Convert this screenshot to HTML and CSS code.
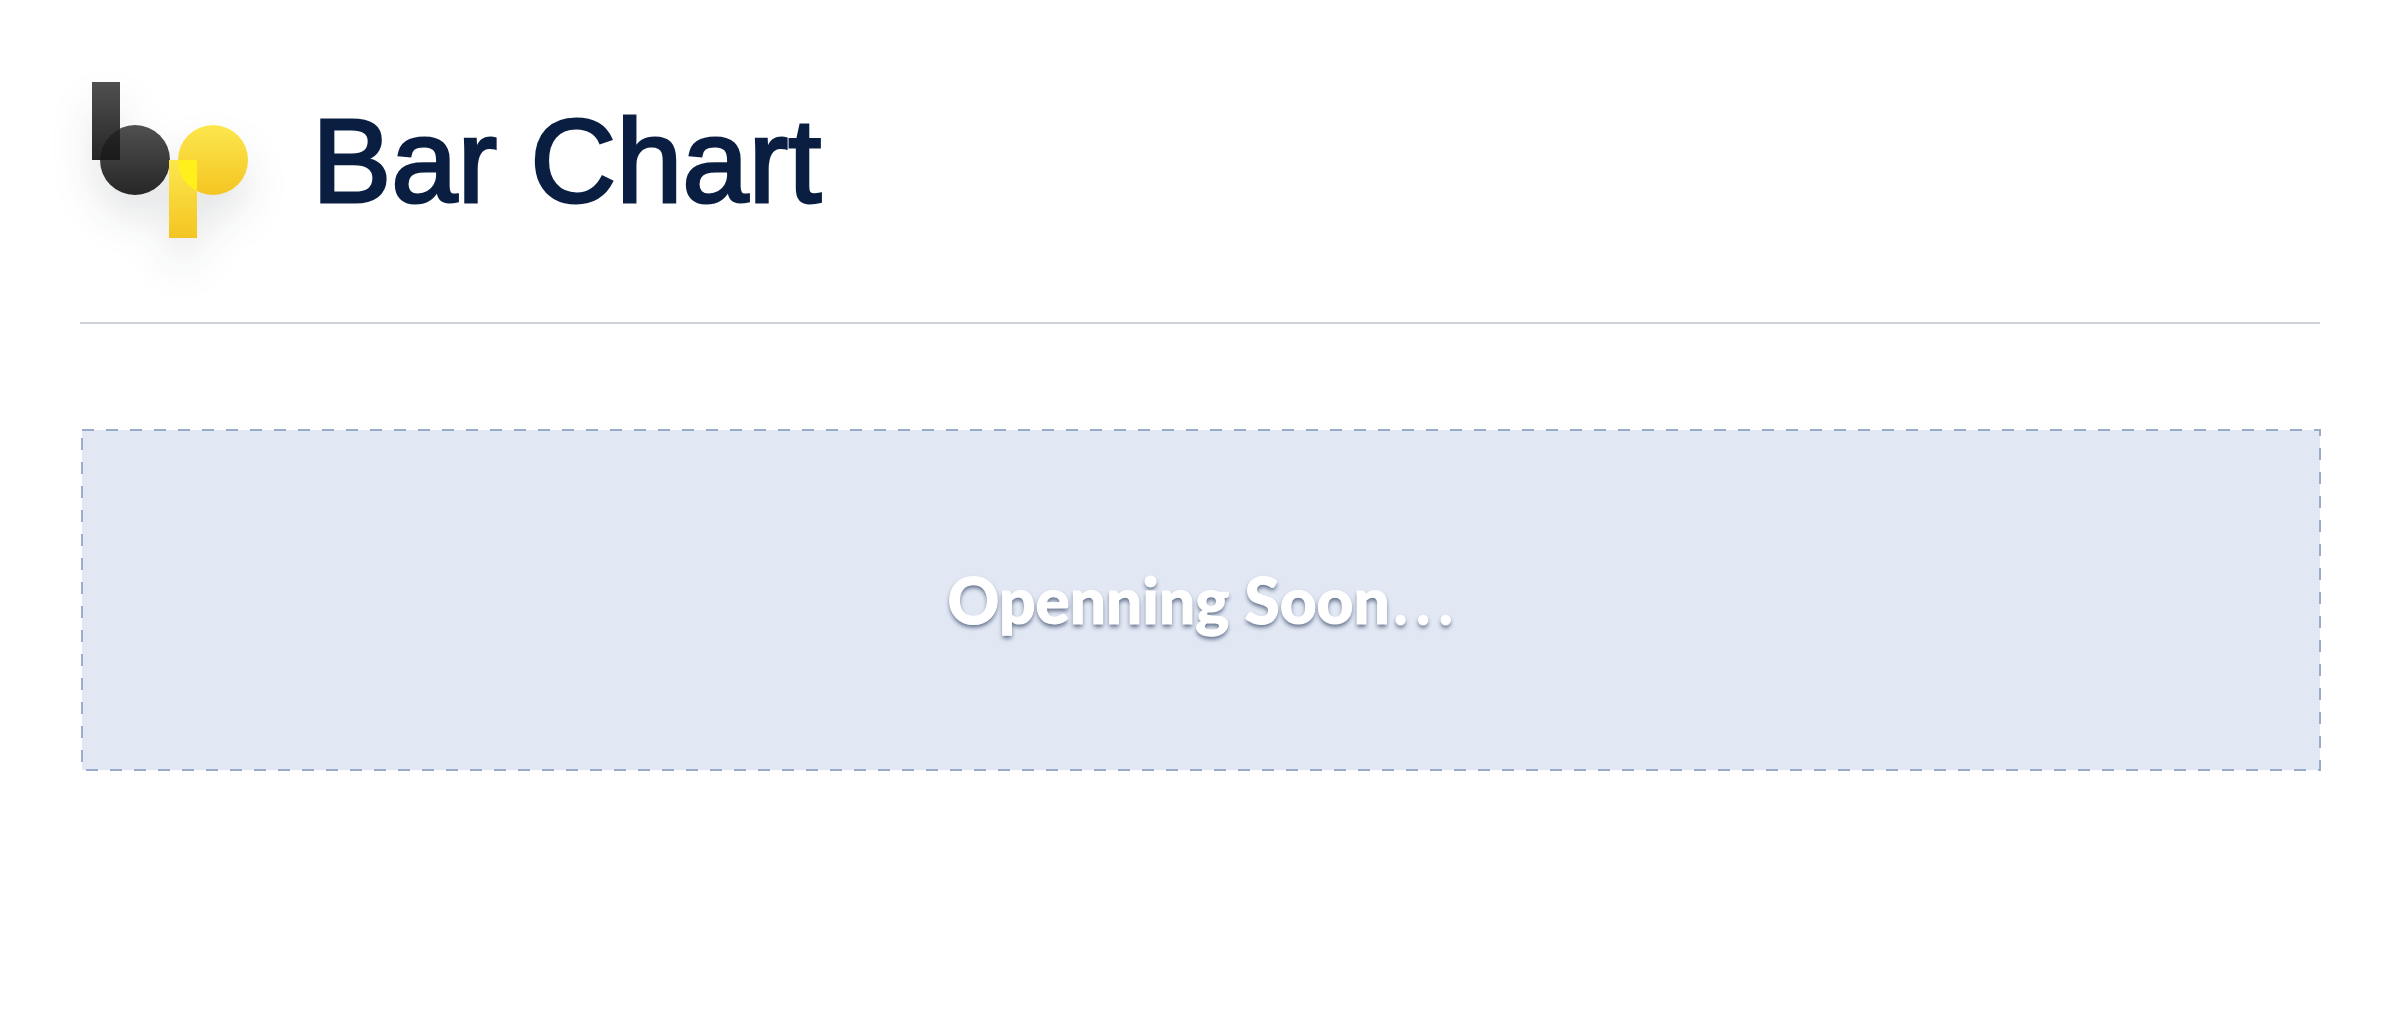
FILE: index.html
```html
<!DOCTYPE html>
<html lang="en">
<head>
<meta charset="utf-8">
<title>Bar Chart</title>
<meta name="viewport" content="width=device-width, initial-scale=1">
<link rel="stylesheet" href="styles.css">
</head>
<body>
<header class="header">
  <svg class="logo" viewBox="0 0 180 180" role="img" aria-label="bp">
    <defs>
      <linearGradient id="dark" x1="0" y1="0" x2="0" y2="1">
        <stop offset="0" stop-color="#505050"/>
        <stop offset="1" stop-color="#262626"/>
      </linearGradient>
      <linearGradient id="overlap" gradientUnits="userSpaceOnUse" x1="0" y1="60" x2="0" y2="100">
        <stop offset="0" stop-color="#292929"/>
        <stop offset="1" stop-color="#1a1a1a"/>
      </linearGradient>
      <linearGradient id="gold" x1="0" y1="0" x2="0" y2="1">
        <stop offset="0" stop-color="#fce74d"/>
        <stop offset="1" stop-color="#f4c522"/>
      </linearGradient>
      <clipPath id="darkCircle"><circle cx="55" cy="100" r="35"/></clipPath>
      <clipPath id="goldCircle"><circle cx="133" cy="100" r="35"/></clipPath>
    </defs>
    <g class="mark">
      <rect x="12" y="22" width="28" height="78" fill="url(#dark)"/>
      <circle cx="55" cy="100" r="35" fill="url(#dark)"/>
      <rect x="12" y="22" width="28" height="78" fill="url(#overlap)" clip-path="url(#darkCircle)"/>
      <circle cx="133" cy="100" r="35" fill="url(#gold)"/>
      <rect x="89" y="100" width="28" height="78" fill="url(#gold)"/>
      <rect x="89" y="100" width="28" height="78" fill="#fff01c" clip-path="url(#goldCircle)"/>
    </g>
  </svg>
  <h1 class="title">Bar Chart</h1>
</header>
<main class="content">
  <section class="placeholder">
    <svg class="outline" aria-hidden="true"><rect width="100%" height="100%"/></svg>
    <p class="message">Openning Soon<span class="dots">…</span></p>
  </section>
</main>
</body>
</html>
```
FILE: styles.css
```css
* {
  box-sizing: border-box;
}

body {
  margin: 0;
  padding: 60px 80px;
  background: #fff;
  font-family: "Liberation Sans", Arial, sans-serif;
}

.header {
  display: flex;
  align-items: flex-start;
  gap: 52px;
  height: 264px;
  border-bottom: 2px solid #ccd2d8;
}

.logo {
  flex: none;
  width: 180px;
  height: 180px;
  overflow: visible;
}

.mark {
  filter: drop-shadow(0 24px 20px rgba(20, 30, 40, 0.11));
}

.title {
  margin: 0;
  padding-top: 36px;
  color: #0a1e42;
  font-size: 119px;
  font-weight: 400;
  line-height: 130px;
  -webkit-text-stroke: 3px #0a1e42;
}

.content {
  padding: 106px 0 0 2px;
}

.placeholder {
  position: relative;
  display: flex;
  align-items: center;
  justify-content: center;
  padding: 130px 0;
  background: #e1e7f3;
}

.outline {
  position: absolute;
  inset: 0;
  width: 100%;
  height: 100%;
  overflow: visible;
  fill: none;
  stroke: #9aaccc;
  stroke-width: 2px;
  stroke-dasharray: 12 12;
}

.message {
  margin: 0;
  color: #fff;
  font-family: Lato, "Open Sans", sans-serif;
  font-size: 64px;
  font-weight: 900;
  line-height: 80px;
  text-shadow: 0 3px 4px rgba(10, 30, 66, 0.6);
  -webkit-text-stroke: 1px #fff;
}

.dots {
  font-family: "Noto Sans CJK SC", sans-serif;
  font-size: 60px;
  font-weight: 500;
  line-height: 1;
}
```
